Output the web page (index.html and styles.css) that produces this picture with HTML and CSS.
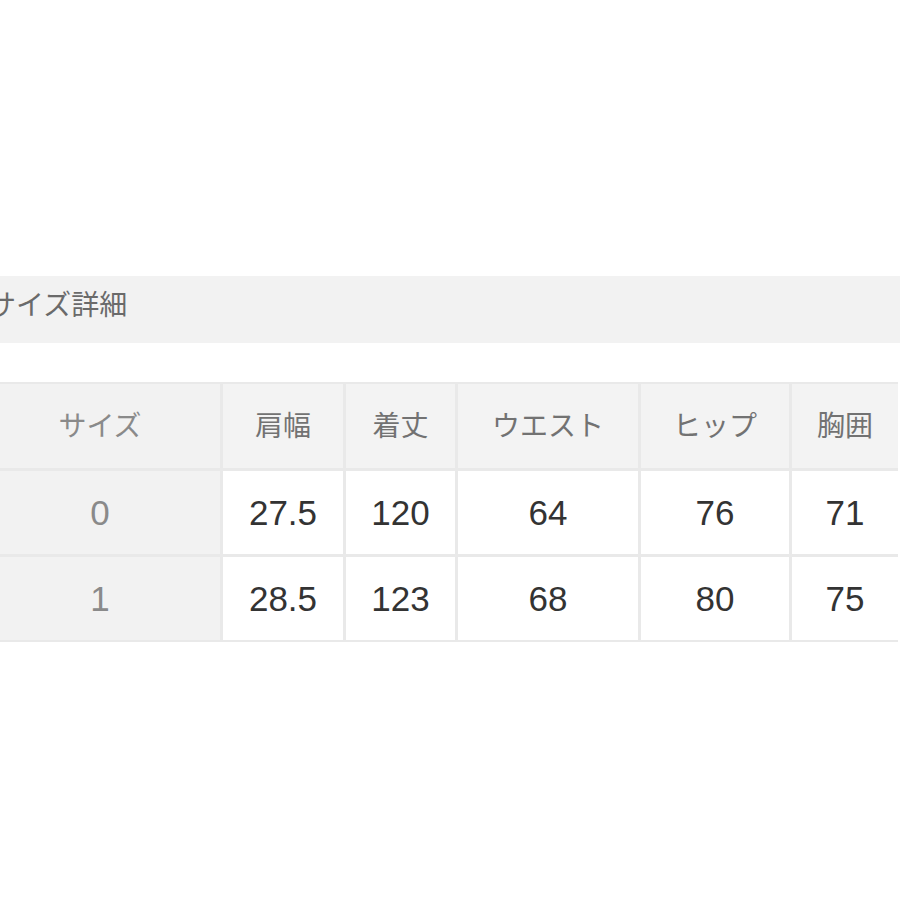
FILE: index.html
```html
<!DOCTYPE html>
<html lang="ja">
<head>
<meta charset="utf-8">
<link rel="stylesheet" href="styles.css">
</head>
<body>
<div class="page">
  <div class="title-bar"><span class="title">サイズ詳細</span></div>
  <div class="size-table">
    <div class="cell head first">サイズ</div>
    <div class="cell head">肩幅</div>
    <div class="cell head">着丈</div>
    <div class="cell head">ウエスト</div>
    <div class="cell head">ヒップ</div>
    <div class="cell head">胸囲</div>

    <div class="cell first">0</div>
    <div class="cell">27.5</div>
    <div class="cell">120</div>
    <div class="cell">64</div>
    <div class="cell">76</div>
    <div class="cell">71</div>

    <div class="cell first">1</div>
    <div class="cell">28.5</div>
    <div class="cell">123</div>
    <div class="cell">68</div>
    <div class="cell">80</div>
    <div class="cell">75</div>
  </div>
</div>
</body>
</html>
```

FILE: styles.css
```css
html, body {
  margin: 0;
  padding: 0;
  background: #ffffff;
}

body {
  width: 900px;
  height: 900px;
  overflow: hidden;
  font-family: "Liberation Sans", "Noto Sans CJK JP", sans-serif;
}

.page {
  padding-top: 276px;
}

.title-bar {
  height: 67px;
  background: #f2f2f2;
  display: flex;
  align-items: center;
  overflow: hidden;
  padding-bottom: 14px;
  box-sizing: border-box;
}

.title {
  font-family: "Noto Sans CJK JP", sans-serif;
  font-size: 28px;
  color: #6a6a6a;
  margin-left: -12px;
  white-space: nowrap;
}

.size-table {
  margin-top: 39px;
  margin-left: -20px;
  width: 918px;
  display: grid;
  grid-template-columns: 240px 120px 109px 180px 148px 106px;
  grid-template-rows: 84px 83px 83px;
  gap: 3px;
  padding: 2px 2px 2px 0;
  box-sizing: border-box;
  background: #e9e9e9;
}

.cell {
  background: #ffffff;
  display: flex;
  align-items: center;
  justify-content: center;
  font-size: 35px;
  color: #333333;
}

.cell.head {
  background: #f3f3f3;
  color: #727272;
  font-family: "Noto Sans CJK JP", sans-serif;
  font-size: 28px;
  padding-bottom: 4px;
  box-sizing: border-box;
}

.cell.first {
  background: #f2f2f2;
  color: #8a8a8a;
}
```
